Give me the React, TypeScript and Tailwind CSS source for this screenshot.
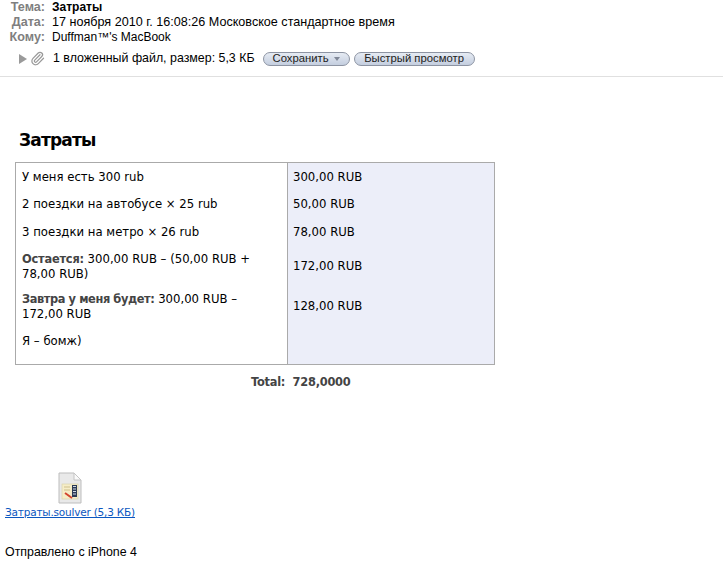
import { Paperclip } from 'lucide-react';

const sans = "font-['Liberation_Sans',sans-serif]";

function HeaderRow({ label, children }: { label: string; children: React.ReactNode }) {
  return (
    <div className="flex h-[15px] items-center leading-[15px]">
      <span className="w-[45px] text-right font-bold text-[#7f7f7f]">{label}</span>
      <span className="ml-[7px] text-black">{children}</span>
    </div>
  );
}

function PillButton({ children, w }: { children: React.ReactNode; w: string }) {
  return (
    <span
      className={`flex h-[14px] ${w} items-center justify-center rounded-full border border-[#8d94a3] bg-gradient-to-b from-[#e6ebf3] to-[#c4cedf] text-[11.3px] leading-none text-[#222]`}
    >
      {children}
    </span>
  );
}

function Row({ left, right, className }: { left: React.ReactNode; right: string; className: string }) {
  return (
    <div className={`grid grid-cols-[271px_207px] ${className}`}>
      <div className="flex items-center pl-[6px] pr-[12px]">
        <div>{left}</div>
      </div>
      <div className="flex items-center border-l border-[#aaa] bg-[#eceef9] pl-[5px]">{right}</div>
    </div>
  );
}

export default function App() {
  return (
    <div className={`h-[568px] w-[723px] overflow-hidden bg-white text-[12.6px] ${sans}`}>
      <div className="h-[77px] border-b border-[#e0e0e0]">
        <div className="pt-0">
          <HeaderRow label="Тема:">
            <b className="text-[12px]">Затраты</b>
          </HeaderRow>
          <HeaderRow label="Дата:">17 ноября 2010 г. 16:08:26 Московское стандартное время</HeaderRow>
          <HeaderRow label="Кому:">
            <span className="text-[12px]">Duffman™'s MacBook</span>
          </HeaderRow>
        </div>
        <div className="mt-[6px] flex h-[15px] items-center">
          <span className="ml-[19px] h-0 w-0 border-y-[5px] border-l-[8px] border-y-transparent border-l-[#9a9a9a]" />
          <Paperclip className="ml-[3px] size-[15px] text-[#999]" strokeWidth={2} />
          <span className="ml-[8px] text-[12.4px] text-black">1 вложенный файл, размер: 5,3 КБ</span>
          <span className="ml-[8px]">
            <PillButton w="w-[87px]">
              Сохранить
              <span className="ml-[5px] h-0 w-0 border-x-[3px] border-t-[4px] border-x-transparent border-t-[#7f8797]" />
            </PillButton>
          </span>
          <span className="ml-[4px]">
            <PillButton w="w-[121px]">Быстрый просмотр</PillButton>
          </span>
        </div>
      </div>

      <div className="pl-[15px] font-['DejaVu_Sans',sans-serif] text-[11.7px] leading-[15px] text-black">
        <h1 className="mt-[52px] ml-[4px] text-[17px] leading-[22px] font-bold tracking-[-0.8px]">Затраты</h1>
        <div className="mt-[11px] w-[480px] border border-[#aaa]">
          <Row className="h-[28px]" left="У меня есть 300 rub" right="300,00 RUB" />
          <Row className="h-[27px]" left="2 поездки на автобусе × 25 rub" right="50,00 RUB" />
          <Row className="h-[28px]" left="3 поездки на метро × 26 rub" right="78,00 RUB" />
          <Row
            className="h-[41px]"
            left={
              <>
                <b className="text-[11.4px] tracking-[-0.2px] text-[#444]">Остается:</b> 300,00 RUB – (50,00 RUB + 78,00 RUB)
              </>
            }
            right="172,00 RUB"
          />
          <Row
            className="h-[39px]"
            left={
              <>
                <b className="text-[11.4px] tracking-[-0.4px] text-[#444]">Завтра у меня будет:</b> 300,00 RUB – 172,00 RUB
              </>
            }
            right="128,00 RUB"
          />
          <Row className="h-[38px]" left={<div className="-mt-[8px]">Я – бомж)</div>} right="" />
        </div>
        <div className="mt-[10px] pl-[236px] text-[11.4px] font-bold tracking-[-0.25px] text-[#444]">Total:&nbsp; 728,0000</div>
      </div>

      <div className="mt-[82px] pl-[5px]">
        <div className="ml-[53px]">
          <svg width="24" height="32" viewBox="0 0 24 32">
            <path d="M1 1h15l7 7v23H1z" fill="#e9e9e9" stroke="#bdbdbd" />
            <path d="M16 1v7h7z" fill="#fafafa" stroke="#c4c4c4" />
            <rect x="4" y="12" width="16" height="15" fill="#f6edc8" stroke="#d8cfa5" strokeWidth="0.6" />
            <rect x="14" y="13" width="5" height="12" fill="#2c3b55" />
            <path d="M15 14.500h3M15 17h3M15 19.500h3M15 22h3" stroke="#cfd8e6" strokeWidth="1" />
            <path d="M6 15h6M6 18h6" stroke="#cdbf8c" strokeWidth="1" />
            <path d="M7 21l7 5" stroke="#d2452f" strokeWidth="2" />
          </svg>
        </div>
        <a className="mt-[1px] block text-[10.5px] leading-[14px] tracking-[-0.2px] font-['DejaVu_Sans',sans-serif] text-[#0b57c0] underline">
          Затраты.soulver (5,3 КБ)
        </a>
        <p className="mt-[26px] text-[12.4px] leading-[15px] text-black">Отправлено с iPhone 4</p>
      </div>
    </div>
  );
}
